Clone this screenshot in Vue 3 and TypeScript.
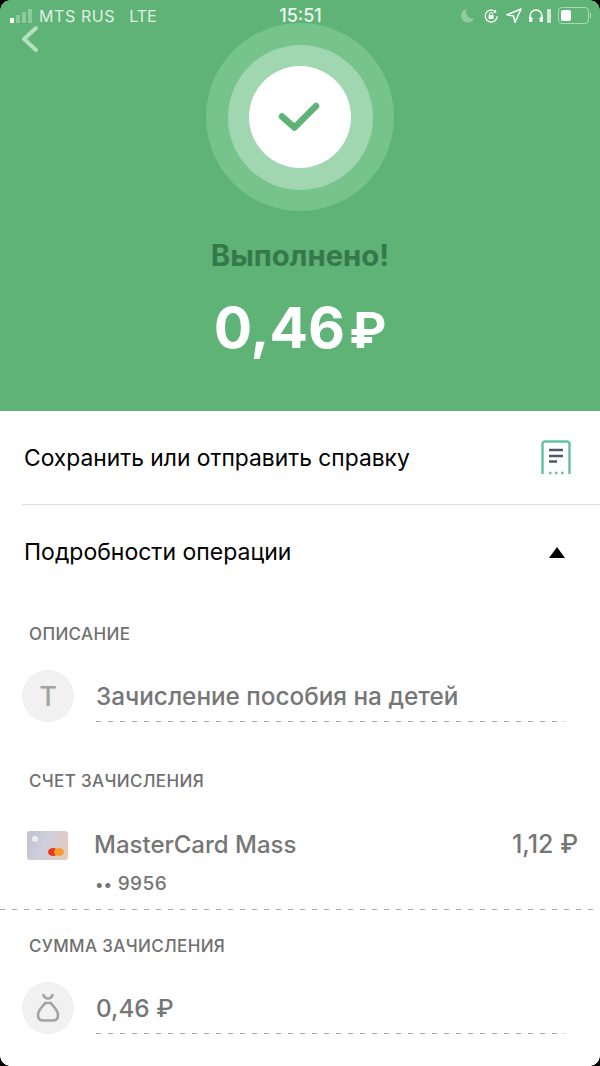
<script setup lang="ts">
const signal: number[] = [5, 8, 11, 14]
</script>

<template>
  <div class="screen">
    <header class="hero">
      <div class="status">
        <div class="status-left">
          <div class="signal">
            <i v-for="(h, n) in signal" :key="h" :class="{ on: n === 0 }" :style="{ height: h + 'px' }"></i>
          </div>
          <span class="carrier">MTS RUS</span>
          <span class="net">LTE</span>
        </div>
        <span class="time">15:51</span>
        <div class="status-right">
          <svg class="ic moon" width="15" height="15" viewBox="0 0 15 15"><path d="M6.500 1A6.800 6.800 0 1 0 14 10.500 7 7 0 0 1 6.500 1Z" fill="#8fcda0"/></svg>
          <svg class="ic" width="17" height="16" viewBox="0 0 17 16" fill="none" stroke="#fff" stroke-width="1.200"><path d="M14.200 8A6 6 0 1 1 12 3.400"/><path d="M11 1.500 13.600 3.600 11 5.800Z" fill="#fff" stroke="none" transform="rotate(30 12 4)"/><rect x="5.600" y="7" width="5" height="4" rx=".6" fill="#fff" stroke="none"/><path d="M6.700 7V5.800a1.400 1.400 0 0 1 2.800 0V7" stroke-width="1"/></svg>
          <svg class="ic" width="16" height="15" viewBox="0 0 16 15"><path d="M15 1 1 6.800 7.500 8 9 14.500Z" fill="none" stroke="#fff" stroke-width="1.500" stroke-linejoin="round"/></svg>
          <svg class="ic" width="16" height="15" viewBox="0 0 16 15" fill="none"><path d="M2 11V8a6 6 0 0 1 12 0v3" stroke="#fff" stroke-width="1.500"/><rect x="1" y="9" width="3.400" height="5" rx="1.200" fill="#fff"/><rect x="11.600" y="9" width="3.400" height="5" rx="1.200" fill="#fff"/></svg>
          <span class="bat-charge"></span>
          <div class="battery"><span class="level"></span></div>
          <span class="nub"></span>
        </div>
      </div>

      <svg class="back" width="18" height="28" viewBox="0 0 18 28" fill="none"><path d="M15 3 3 14l12 11" stroke="#b5e0c0" stroke-width="4" stroke-linecap="round" stroke-linejoin="round"/></svg>

      <div class="ring outer">
        <div class="ring middle">
          <div class="ring inner">
            <svg width="44" height="34" viewBox="0 0 44 34" fill="none"><path d="M4 15.500 16.500 26.500 38 5" stroke="#5fb377" stroke-width="6.500" stroke-linecap="round" stroke-linejoin="round"/></svg>
          </div>
        </div>
      </div>

      <h1 class="title">Выполнено!</h1>
      <div class="amount">0,46<span class="rub">₽</span></div>
    </header>

    <main>
      <div class="action">
        <span>Сохранить или отправить справку</span>
        <svg class="receipt" width="30" height="36" viewBox="0 0 30 36" fill="none">
          <path d="M1.500 34V4a2.500 2.500 0 0 1 2.500-2.500h22A2.500 2.500 0 0 1 28.500 4v30" stroke="#66c2a5" stroke-width="2.500"/>
          <path d="M8 10h14M8 16h14M8 21.500h8" stroke="#53586a" stroke-width="2.400"/>
          <path d="M8 33h2.500M14 33h2.500M20 33h2.500" stroke="#66c2a5" stroke-width="2.500"/>
        </svg>
      </div>

      <div class="toggle">
        <span>Подробности операции</span>
        <span class="arrow"></span>
      </div>

      <section class="block first">
        <h2>ОПИСАНИЕ</h2>
        <div class="field">
          <div class="avatar"><span class="t">Т</span></div>
          <div class="value">Зачисление пособия на детей</div>
        </div>
      </section>

      <section class="account">
        <h2>СЧЕТ ЗАЧИСЛЕНИЯ</h2>
        <div class="card-row">
          <div class="card"><i class="dot"></i><i class="mc"><b></b><b></b></i></div>
          <span class="card-name">MasterCard Mass</span>
          <span class="balance">1,12 ₽</span>
        </div>
        <div class="mask"><span class="dots">••</span> 9956</div>
      </section>

      <section class="block">
        <h2>СУММА ЗАЧИСЛЕНИЯ</h2>
        <div class="field">
          <div class="avatar">
            <svg width="24" height="32" viewBox="0 0 24 32" fill="none" stroke="#a3a3a3" stroke-width="2.600" stroke-linecap="round" stroke-linejoin="round"><path d="M7.500 3c1 2.500 2.500 3.500 4.500 3.500s3.500-1 4.500-3.500"/><path d="M9 11h6c1 3 7 6 7 12 0 4-2 5.500-5 5.500H7c-3 0-5-1.500-5-5.500 0-6 6-9 7-12Z"/></svg>
          </div>
          <div class="value">0,46 ₽</div>
        </div>
      </section>
    </main>

    <i class="corner tl"></i><i class="corner tr"></i><i class="corner bl"></i><i class="corner br"></i>
  </div>
</template>

<style>
html, body { margin: 0; background: #fff; }
</style>

<style scoped>
.screen {
  position: relative;
  width: 600px;
  height: 1066px;
  overflow: hidden;
  background: #fff;
  font-family: Inter, "Noto Sans", "Liberation Sans", sans-serif;
  color: #000;
}
.hero {
  position: relative;
  height: 411px;
  background: #5fb377;
  display: flex;
  flex-direction: column;
  align-items: center;
}
.status {
  width: 100%;
  height: 23px;
  box-sizing: border-box;
  padding: 5px 9px 0 10px;
  display: grid;
  grid-template-columns: 1fr auto 1fr;
  align-items: center;
  color: #fff;
  position: relative;
  z-index: 2;
}
.status-left { display: flex; align-items: center; font-size: 16px; color: #dff0e3; }
.signal { display: flex; align-items: flex-end; gap: 2px; height: 14px; margin-right: 7px; }
.signal i { width: 4px; background: #8dcb9f; display: block; }
.signal i.on { background: #fff; }
.carrier { letter-spacing: .6px; }
.net { margin-left: 14px; }
.time { font-size: 18px; font-weight: 500; color: #eef8f0; }
.status-right { display: flex; align-items: center; justify-content: flex-end; }
.ic { display: block; margin-right: 6px; }
.moon { margin-right: 8px; }
.bat-charge { width: 4px; height: 14px; background: #cfe9d6; border-radius: 1px; margin: 0 7px 0 -3px; }
.battery {
  width: 25px;
  height: 11px;
  border: 1px solid #a9dab6;
  border-radius: 4px;
  padding: 2px;
  box-sizing: content-box;
}
.level { display: block; width: 10px; height: 100%; background: #fff; border-radius: 2px; }
.nub { width: 1px; height: 5px; background: #a9dab6; margin-left: 1px; }
.back { position: absolute; left: 21px; top: 25px; }
.ring {
  border-radius: 50%;
  display: flex;
  align-items: center;
  justify-content: center;
  flex: none;
}
.outer { width: 188px; height: 188px; background: #76c48c; }
.middle { width: 145px; height: 145px; background: #a0d7b0; }
.inner { width: 102px; height: 102px; background: #fff; }
.inner svg { display: block; margin-top: 1px; }
.title {
  margin: 28px 0 0;
  font-size: 29.300px;
  line-height: 34px;
  font-weight: 700;
  color: #35794b;
}
.amount {
  margin-top: 19px;
  font-size: 57px;
  line-height: 72px;
  font-weight: 700;
  color: #fff;
  display: flex;
  align-items: baseline;
}
.rub { font-size: 50px; margin-left: 4px; }
.action {
  margin-left: 22px;
  height: 94px;
  box-sizing: border-box;
  border-bottom: 1px solid #dcdcdc;
  padding: 0 29px 0 2px;
  display: flex;
  align-items: center;
  justify-content: space-between;
  font-size: 22.800px;
}
.receipt { display: block; margin-top: 1px; }
.toggle {
  height: 94px;
  padding: 0 35px 0 24px;
  display: flex;
  align-items: center;
  justify-content: space-between;
  font-size: 23px;
}
.arrow {
  width: 0;
  height: 0;
  border-left: 8px solid transparent;
  border-right: 8px solid transparent;
  border-bottom: 11px solid #000;
}
h2 {
  margin: 0;
  font-size: 17px;
  line-height: 20px;
  font-weight: 500;
  color: #6f6f6f;
  letter-spacing: .35px;
}
.block { padding: 0 35px 0 22px; }
.block h2 { padding-left: 7px; }
.first { margin-top: 25px; }
.field { display: flex; align-items: center; margin-top: 26px; }
.avatar {
  width: 52px;
  height: 52px;
  border-radius: 50%;
  background: #f1f1f1;
  flex: none;
  display: flex;
  align-items: center;
  justify-content: center;
}
.t { font-size: 27px; font-weight: 500; color: #a3a3a3; }
.value {
  flex: 1;
  margin-left: 22px;
  margin-top: 5px;
  height: 47px;
  box-sizing: border-box;
  font-size: 24.300px;
  line-height: 42px;
  font-weight: 500;
  color: #767676;
  background: repeating-linear-gradient(to right, #a8a8a8 0 5px, transparent 5px 12px) left bottom / 100% 1px no-repeat;
}
.account {
  margin-top: 49px;
  height: 139px;
  box-sizing: border-box;
  padding: 0 22px 0 29px;
  background: repeating-linear-gradient(to right, #a8a8a8 0 5px, transparent 5px 12px) left bottom / 100% 1px no-repeat;
}
.card-row { display: flex; align-items: center; margin-top: 38px; height: 32px; }
.card {
  position: relative;
  width: 41px;
  height: 29px;
  margin-left: -2px;
  border-radius: 3px;
  background: linear-gradient(115deg, #bfc0cb 0%, #cfcfde 45%, #eac8b6 100%);
  flex: none;
}
.dot { position: absolute; left: 5px; top: 5px; width: 6px; height: 6px; border-radius: 50%; background: #eeeef2; }
.mc { position: absolute; right: 4px; bottom: 4px; display: flex; }
.mc b { display: block; width: 10px; height: 8px; border-radius: 50%; background: #e8391f; }
.mc b + b { background: #f0a030; margin-left: -4px; }
.card-name { margin-left: 26px; padding-bottom: 2px; font-size: 24px; font-weight: 500; color: #767676; flex: 1; }
.balance { padding-bottom: 2px; font-size: 25px; font-weight: 500; color: #767676; }
.mask {
  margin: 11px 0 0 66px;
  font-size: 19px;
  line-height: 24px;
  font-weight: 500;
  color: #767676;
  letter-spacing: .5px;
}
.dots { font-size: 16px; letter-spacing: 0; }
.account + .block { margin-top: 26px; }
.corner { position: absolute; width: 10px; height: 10px; background: radial-gradient(circle at var(--c), transparent 9.500px, #000 10px); }
.tl { left: 0; top: 0; --c: 100% 100%; }
.tr { right: 0; top: 0; --c: 0 100%; }
.bl { left: 0; bottom: 0; --c: 100% 0; }
.br { right: 0; bottom: 0; --c: 0 0; }
</style>
